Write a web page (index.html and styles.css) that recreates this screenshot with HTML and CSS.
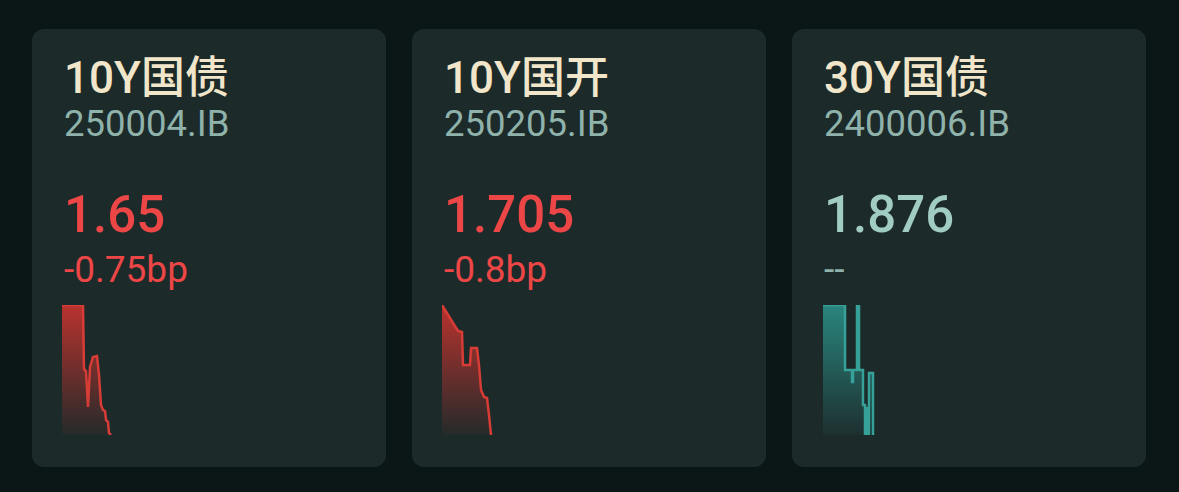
FILE: index.html
```html
<!DOCTYPE html>
<html lang="zh-CN">
<head>
  <meta charset="UTF-8" />
  <meta name="viewport" content="width=device-width, initial-scale=1.0"/>
  <title>债券行情</title>
  <link rel="stylesheet" href="styles.css">
</head>
<body>
  <div class="cards">
    <div class="card">
      <div class="name">10Y国债</div>
      <div class="code">250004.IB</div>
      <div class="yield down">1.65</div>
      <div class="change down">-0.75bp</div>
      <svg class="spark" width="52" height="130" viewBox="0 0 52 130">
        <defs>
          <linearGradient id="fillRed1" x1="0" y1="0" x2="0" y2="1">
            <stop offset="0" stop-color="#c2332e" stop-opacity="0.95"/>
            <stop offset="1" stop-color="#c2332e" stop-opacity="0.05"/>
          </linearGradient>
        </defs>
        <path d="M0,0 L21,0 L22,64 L24,66 L26,102 L28,62 L31,52 L35,51 L37,70 L39,100 L41,105 L43,106 L44,115 L46,117 L47,128 L49,130 L0,130 Z" fill="url(#fillRed1)"/>
        <path d="M0,0 L21,0 L22,64 L24,66 L26,102 L28,62 L31,52 L35,51 L37,70 L39,100 L41,105 L43,106 L44,115 L46,117 L47,128 L49,130" fill="none" stroke="#d83c36" stroke-width="2.5"/>
      </svg>
    </div>

    <div class="card">
      <div class="name">10Y国开</div>
      <div class="code">250205.IB</div>
      <div class="yield down">1.705</div>
      <div class="change down">-0.8bp</div>
      <svg class="spark" width="52" height="130" viewBox="0 0 52 130">
        <defs>
          <linearGradient id="fillRed2" x1="0" y1="0" x2="0" y2="1">
            <stop offset="0" stop-color="#c2332e" stop-opacity="0.95"/>
            <stop offset="1" stop-color="#c2332e" stop-opacity="0.05"/>
          </linearGradient>
        </defs>
        <path d="M0,0 L16,26 L20,27 L21,60 L28,60 L29,43 L35,43 L37,60 L39,85 L42,92 L45,93 L47,110 L49,130 L0,130 Z" fill="url(#fillRed2)"/>
        <path d="M0,0 L16,26 L20,27 L21,60 L28,60 L29,43 L35,43 L37,60 L39,85 L42,92 L45,93 L47,110 L49,130" fill="none" stroke="#d83c36" stroke-width="2.5"/>
      </svg>
    </div>

    <div class="card">
      <div class="name">30Y国债</div>
      <div class="code">2400006.IB</div>
      <div class="yield flat">1.876</div>
      <div class="change flat">--</div>
      <svg class="spark" width="54" height="130" viewBox="0 0 54 130">
        <defs>
          <linearGradient id="fillTeal" x1="0" y1="0" x2="0" y2="1">
            <stop offset="0" stop-color="#2b8a83" stop-opacity="0.95"/>
            <stop offset="1" stop-color="#2b8a83" stop-opacity="0.06"/>
          </linearGradient>
        </defs>
        <path d="M1,0 L23,0 L23,65 L30,65 L30,77 L31,77 L31,65 L35,65 L35,0 L37,0 L37,65 L41,65 L41,100 L43,100 L43,130 L44,130 L44,103 L46,103 L46,130 L47,130 L47,68 L51,68 L51,130 L1,130 Z" fill="url(#fillTeal)"/>
        <path d="M1,0 L23,0 L23,65 L30,65 L30,77 L31,77 L31,65 L35,65 L35,0 L37,0 L37,65 L41,65 L41,100 L43,100 L43,130 L44,130 L44,103 L46,103 L46,130 L47,130 L47,68 L51,68 L51,130" fill="none" stroke="#36a198" stroke-width="2.5"/>
      </svg>
    </div>
  </div>
</body>
</html>
```

FILE: styles.css
```css
body {
  margin: 0;
  padding: 29px 32px;
  background-color: #0b1717;
  font-family: Roboto, "Noto Sans CJK SC", sans-serif;
}

.cards {
  display: flex;
  gap: 26px;
}

.card {
  width: 354px;
  box-sizing: border-box;
  padding: 25px 32px 32px;
  background: #1c2a2a;
  border-radius: 12px;
  display: flex;
  flex-direction: column;
  align-items: flex-start;
}

.name {
  font-size: 44px;
  line-height: 48px;
  font-weight: 500;
  color: #f1e6c9;
}

.code {
  margin-top: 2px;
  font-size: 36.5px;
  line-height: 40px;
  color: #8fb2aa;
}

.yield {
  margin-top: 43px;
  font-size: 51px;
  line-height: 56px;
  font-weight: 500;
}

.change {
  margin-top: 7px;
  font-size: 37px;
  line-height: 40px;
}

.down {
  color: #ec4646;
}

.yield.flat {
  color: #a0ccc4;
}

.change.flat {
  color: #8fb2aa;
}

.spark {
  display: block;
  margin-top: 15px;
  margin-left: -2px;
}
```
